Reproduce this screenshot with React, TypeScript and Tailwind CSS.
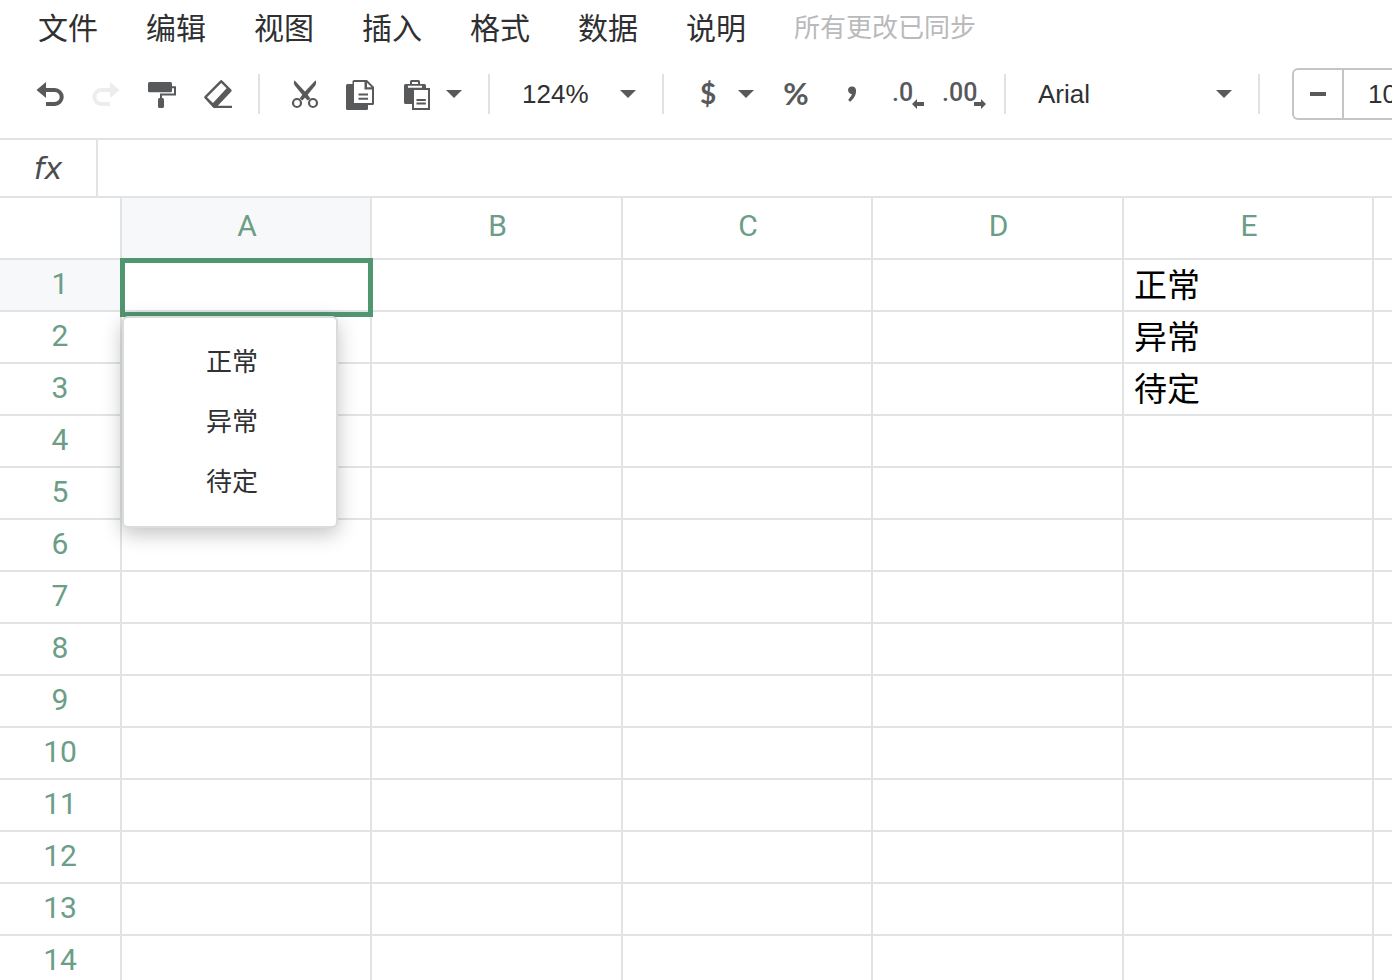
import type { ReactNode } from "react";

interface IconButtonProps {
  label: string;
  disabled?: boolean;
  children: ReactNode;
}

interface ToolbarSelectProps {
  label: string;
  options: string[];
  width: string;
}

const menus = ["文件", "编辑", "视图", "插入", "格式", "数据", "说明"];

const columns = [
  { name: "A", width: "w-[250px]" },
  { name: "B", width: "w-[251px]" },
  { name: "C", width: "w-[250px]" },
  { name: "D", width: "w-[251px]" },
  { name: "E", width: "w-[250px]" },
  { name: "F", width: "w-[251px]" },
];

const rows = Array.from({ length: 14 }, (_, i) => i + 1);

const statuses = ["正常", "异常", "待定"];

const cells: Record<string, string> = {
  E1: "正常",
  E2: "异常",
  E3: "待定",
};

const IconButton = ({ label, disabled, children }: IconButtonProps) => (
  <button
    type="button"
    aria-label={label}
    disabled={disabled}
    className="flex h-14 w-14 shrink-0 items-center justify-center text-[#58595b] disabled:text-[#ecedef]"
  >
    {children}
  </button>
);

const Icon = ({ className = "", children }: { className?: string; children: ReactNode }) => (
  <svg
    viewBox="0 0 28 28"
    fill="currentColor"
    className={`h-7 w-7 overflow-visible ${className}`}
    aria-hidden="true"
  >
    {children}
  </svg>
);

const Caret = () => (
  <svg viewBox="0 0 16 8" fill="currentColor" className="h-2 w-4" aria-hidden="true">
    <path d="M0 0h16L8 8z" />
  </svg>
);

const CaretButton = ({ label }: { label: string }) => (
  <button
    type="button"
    aria-label={label}
    className="flex h-14 w-5 shrink-0 items-center justify-center text-[#58595b]"
  >
    <Caret />
  </button>
);

const ToolbarSelect = ({ label, options, width }: ToolbarSelectProps) => (
  <div className={`relative shrink-0 text-[#58595b] ${width}`}>
    <select
      aria-label={label}
      className="h-14 w-full appearance-none bg-transparent text-[26px] text-[#303133] outline-none"
    >
      {options.map((option) => (
        <option key={option}>{option}</option>
      ))}
    </select>
    <span className="pointer-events-none absolute inset-y-0 right-0 flex items-center">
      <Caret />
    </span>
  </div>
);

const Divider = () => <div className="h-10 w-0.5 shrink-0 bg-[#e0e1e2]" />;

const UndoIcon = ({ className }: { className?: string }) => (
  <Icon className={className}>
    <path d="M.5 10 10 2v16z" />
    <path d="M8 10h10.7a7 7 0 0 1 0 14H10" fill="none" stroke="currentColor" strokeWidth="4" />
  </Icon>
);

const MenuBar = () => (
  <nav className="flex h-14 shrink-0 items-center gap-12 overflow-hidden pl-[38px] text-[30px] whitespace-nowrap text-[#2f3032]">
    {menus.map((menu) => (
      <button key={menu} type="button">
        {menu}
      </button>
    ))}
    <span className="text-[26px] text-[#b9babc]">所有更改已同步</span>
  </nav>
);

const Toolbar = () => (
  <div className="flex h-21 shrink-0 items-center overflow-hidden border-b-2 border-[#e2e3e4] pb-1.5">
    <div className="flex pr-3 pl-[22px]">
      <IconButton label="撤销">
        <UndoIcon />
      </IconButton>
      <IconButton label="重做" disabled>
        <UndoIcon className="-scale-x-100" />
      </IconButton>
      <IconButton label="格式刷">
        <Icon>
          <rect x="0" y="2" width="24" height="10.3" rx="1.5" />
          <path d="M24 7.2h3v7.2H13V19" fill="none" stroke="currentColor" strokeWidth="2" />
          <rect x="10" y="18" width="6" height="10" rx="1.5" />
        </Icon>
      </IconButton>
      <IconButton label="清除格式">
        <Icon>
          <path
            fillRule="evenodd"
            d="M16.2.5q1-.9 2 0l9 8.9q1 1 .1 2L13.8 25.8H28V28H10.5q-.8 0-1.4-.6L.6 18.2q-.9-1 0-2zM17.2 3 3 17.2l6 5.8L22.6 8.2z"
          />
        </Icon>
      </IconButton>
    </div>
    <Divider />
    <div className="flex pr-6 pl-4">
      <IconButton label="剪切">
        <Icon>
          <path d="M4.4.2C3.5 2.5 3.8 4 5 5.8l6.5 8 6.1 6.8 2.8-2.2-3.6-4.8z" />
          <path d="M25.6.2c.9 2.3.6 3.8-.6 5.6l-6.5 8-6.1 6.8-2.8-2.2 3.6-4.8z" />
          <circle cx="7" cy="23" r="4" fill="none" stroke="currentColor" strokeWidth="2.2" />
          <circle cx="23" cy="23" r="4" fill="none" stroke="currentColor" strokeWidth="2.2" />
        </Icon>
      </IconButton>
      <IconButton label="复制">
        <Icon>
          <rect x="0" y="4" width="22" height="26" rx="1.5" />
          <path d="M6.500 1.500Q6.500 0 8 0H21l7 7v16.500q0 1.500-1.500 1.500H6.500z" />
          <path d="M8 2h10.500v7.500H26V23H8z" fill="white" />
          <path d="M21 2.800 25.500 7.300H21z" fill="white" />
          <path d="M12.500 14.500H22M12.500 18.700H22" stroke="currentColor" strokeWidth="2" />
        </Icon>
      </IconButton>
      <IconButton label="粘贴">
        <Icon>
          <path d="M3.500 4H8V1.500Q8 0 9.500 0h7Q18 0 18 1.500V4h4.500Q24 4 24 5.500V8h4v22H10v-6H3.500Q2 24 2 22.500v-17Q2 4 3.500 4z" />
          <path d="M10 2h6v2h-6zM6 5.700h14v2H6zM12 10h14v18H12z" fill="white" />
          <path d="M14.500 20h9.300M14.500 23.600h9.300" stroke="currentColor" strokeWidth="2" />
        </Icon>
      </IconButton>
      <CaretButton label="粘贴选项" />
    </div>
    <Divider />
    <div className="flex pr-[26px] pl-8">
      <ToolbarSelect label="缩放" options={["124%", "100%", "75%", "50%"]} width="w-[114px]" />
    </div>
    <Divider />
    <div className="flex pr-3 pl-4 font-[Lato,sans-serif] font-bold">
      <IconButton label="货币格式">
        <Icon>
          <text x="14" y="24" fontSize="28" textAnchor="middle">
            $
          </text>
        </Icon>
      </IconButton>
      <CaretButton label="更多货币格式" />
      <div className="flex pl-3">
        <IconButton label="百分比格式">
          <Icon>
            <text x="14" y="25" fontSize="31" textAnchor="middle">
              %
            </text>
          </Icon>
        </IconButton>
        <IconButton label="千位分隔符">
          <Icon>
            <text x="14" y="14" fontSize="54" textAnchor="middle">
              ,
            </text>
          </Icon>
        </IconButton>
        <IconButton label="减少小数位数">
          <Icon className="font-[Roboto,sans-serif] font-medium">
            <text x="-2" y="21" fontSize="25">
              .0
            </text>
            <path d="m18 24 5-5v3h7v4h-7v3z" />
          </Icon>
        </IconButton>
        <IconButton label="增加小数位数">
          <Icon className="font-[Roboto,sans-serif] font-medium">
            <text x="-8" y="21" fontSize="25">
              .00
            </text>
            <path d="m36 24-5-5v3h-7v4h7v3z" />
          </Icon>
        </IconButton>
      </div>
    </div>
    <Divider />
    <div className="flex pr-[26px] pl-8">
      <ToolbarSelect label="字体" options={["Arial", "Helvetica", "Verdana"]} width="w-[194px]" />
    </div>
    <Divider />
    <div className="shrink-0 pl-8">
      <div className="flex h-[52px] rounded-md border-2 border-[#c4c5c7] text-[#58595b]">
        <button
          type="button"
          aria-label="减小字号"
          className="flex w-[50px] items-center justify-center border-r-2 border-[#c4c5c7]"
        >
          <span className="h-1 w-4 bg-current" />
        </button>
        <input
          aria-label="字号"
          defaultValue="10"
          className="w-20 pl-6 text-[26px] text-[#303133] outline-none"
        />
      </div>
    </div>
  </div>
);

const FormulaBar = () => (
  <div className="flex h-[58px] shrink-0 border-b-2 border-[#e2e3e4]">
    <label
      htmlFor="formula"
      className="flex w-[98px] items-center justify-center border-r-2 border-[#e2e3e4] font-['DejaVu_Sans',sans-serif] text-[30px] text-[#4c4d4f] italic"
    >
      fx
    </label>
    <input id="formula" className="min-w-0 flex-1 px-4 text-[26px] outline-none" />
  </div>
);

const StatusMenu = () => (
  <ul className="absolute top-14 left-0 z-20 w-[216px] rounded-md border-2 border-[#d9dcde] bg-white py-3.5 shadow-[0_6px_20px_rgba(0,0,0,0.24)]">
    {statuses.map((status) => (
      <li key={status}>
        <button
          type="button"
          className="h-[60px] w-full px-[82px] text-left text-[26px] whitespace-nowrap text-[#303133]"
        >
          {status}
        </button>
      </li>
    ))}
  </ul>
);

const Sheet = () => (
  <div className="min-h-0 flex-1 overflow-hidden">
    <table className="w-[1625px] table-fixed border-separate border-spacing-0">
      <colgroup>
        <col className="w-[122px]" />
        {columns.map(({ name, width }) => (
          <col key={name} className={width} />
        ))}
      </colgroup>
      <thead className="font-[Roboto,sans-serif] text-[30px] text-[#6b9d87]">
        <tr className="h-[62px]">
          <td className="border-r-2 border-b-2 border-[#e2e3e4]" />
          {columns.map(({ name }) => (
            <th
              key={name}
              scope="col"
              className={`border-r-2 border-b-2 border-[#e2e3e4] p-0 pb-1.5 pl-0.5 font-normal ${name === "A" ? "bg-[#f6f8fa]" : ""}`}
            >
              {name}
            </th>
          ))}
        </tr>
      </thead>
      <tbody>
        {rows.map((row) => (
          <tr key={row} className="h-[52px]">
            <th
              scope="row"
              className={`border-r-2 border-b-2 border-[#e2e3e4] p-0 pb-0.5 font-[Roboto,sans-serif] text-[30px] leading-10 font-normal text-[#6b9d87] ${row === 1 ? "bg-[#f6f8fa]" : ""}`}
            >
              {row}
            </th>
            {columns.map(({ name }) => (
              <td
                key={name}
                className="relative border-r-2 border-b-2 border-[#e2e3e4] p-0 pt-0.5 pl-2.5 text-[33px] leading-10 text-black"
              >
                {cells[`${name}${row}`]}
                {name === "A" && row === 1 && (
                  <>
                    <div className="absolute -top-0.5 -right-[3px] -bottom-[7px] -left-0.5 z-10 border-5 border-[#509671]" />
                    <StatusMenu />
                  </>
                )}
              </td>
            ))}
          </tr>
        ))}
      </tbody>
    </table>
  </div>
);

export default function App() {
  return (
    <main className="flex h-screen flex-col overflow-hidden bg-white font-['Liberation_Sans','Noto_Sans_CJK_SC',sans-serif]">
      <MenuBar />
      <Toolbar />
      <FormulaBar />
      <Sheet />
    </main>
  );
}
